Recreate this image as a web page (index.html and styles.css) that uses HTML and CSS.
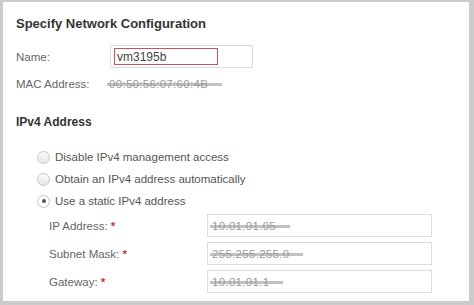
FILE: index.html
```html
<!DOCTYPE html>
<html>
<head>
<meta charset="utf-8">
<link rel="stylesheet" href="styles.css">
</head>
<body>
<div class="panel">
  <h1 class="title">Specify Network Configuration</h1>
  <div class="row name-row">
    <span class="label">Name:</span>
    <div class="input name-input"><span class="hl">vm3195b</span></div>
  </div>
  <div class="row mac-row">
    <span class="label">MAC Address:</span>
    <span class="redacted">00:50:56:07:60:4B</span>
  </div>
  <h2 class="section">IPv4 Address</h2>
  <div class="radios">
    <label class="radio"><span class="dot"></span>Disable IPv4 management access</label>
    <label class="radio"><span class="dot"></span>Obtain an IPv4 address automatically</label>
    <label class="radio"><span class="dot on"></span>Use a static IPv4 address</label>
  </div>
  <div class="fields">
    <div class="field">
      <span class="flabel">IP Address: <span class="req">*</span></span>
      <div class="input finput"><span class="redacted">10.01.01.05</span></div>
    </div>
    <div class="field">
      <span class="flabel">Subnet Mask: <span class="req">*</span></span>
      <div class="input finput"><span class="redacted">255.255.255.0</span></div>
    </div>
    <div class="field">
      <span class="flabel">Gateway: <span class="req">*</span></span>
      <div class="input finput"><span class="redacted">10.01.01.1</span></div>
    </div>
  </div>
</div>
</body>
</html>
```
FILE: styles.css
```css
html, body {
  margin: 0;
  padding: 0;
}
body {
  width: 474px;
  height: 305px;
  background: #cbcbcb;
  font-family: "Liberation Sans", Arial, sans-serif;
  overflow: hidden;
}
.panel {
  box-sizing: border-box;
  margin: 2px 5px 0 3px;
  width: 466px;
  height: 299px;
  background: #fff;
  padding: 12px 0 0 13px;
}
.title {
  margin: 0;
  height: 20px;
  line-height: 20px;
  font-size: 13px;
  font-weight: bold;
  color: #333;
}
.row {
  display: flex;
  align-items: center;
}
.label {
  width: 94px;
  font-size: 11.5px;
  color: #666;
}
.name-row {
  margin-top: 11px;
  height: 23px;
}
.input {
  box-sizing: border-box;
  border: 1px solid #dcdcdc;
  background: #fff;
  display: flex;
  align-items: center;
}
.name-input {
  width: 143px;
  height: 23px;
  padding-left: 3px;
}
.hl {
  box-sizing: border-box;
  display: flex;
  align-items: center;
  width: 104px;
  height: 17px;
  border: 1px solid #c25560;
  padding-left: 2px;
  font-size: 12px;
  color: #444;
}
.mac-row {
  margin-top: 6px;
  height: 20px;
}
.mac-row .label {
  width: 91px;
}
.redacted {
  font-size: 11.5px;
  color: #9a9a9a;
  padding: 0 14px 0 2px;
  border-radius: 3px;
  background: linear-gradient(to bottom, transparent 40%, #c2c2c2 40%, #c2c2c2 64%, transparent 64%);
  letter-spacing: 0.3px;
}
.section {
  margin: 18px 0 0 0;
  height: 20px;
  line-height: 20px;
  font-size: 12px;
  font-weight: bold;
  color: #333;
}
.radios {
  margin-top: 14px;
  padding-left: 18px;
  display: flex;
  flex-direction: column;
}
.radio {
  height: 22px;
  display: flex;
  align-items: center;
  font-size: 11.5px;
  color: #555;
}
.dot {
  box-sizing: border-box;
  width: 13px;
  height: 13px;
  border-radius: 50%;
  border: 1px solid #c4c4c4;
  background: linear-gradient(#fbfbfb, #e8e8e8);
  margin-right: 5px;
  margin-left: 3px;
  position: relative;
}
.dot.on {
  background: #fff;
}
.dot.on::after {
  content: "";
  position: absolute;
  left: 3.5px;
  top: 3.5px;
  width: 4px;
  height: 4px;
  border-radius: 50%;
  background: #555;
}
.fields {
  margin-top: 2px;
  padding-left: 33px;
  display: flex;
  flex-direction: column;
  gap: 5px;
}
.field {
  display: flex;
  align-items: center;
  height: 23px;
}
.flabel {
  width: 158px;
  font-size: 11.5px;
  color: #666;
}
.req {
  color: #c0392b;
  font-weight: bold;
}
.finput {
  width: 225px;
  height: 23px;
  padding-left: 2px;
}
```
